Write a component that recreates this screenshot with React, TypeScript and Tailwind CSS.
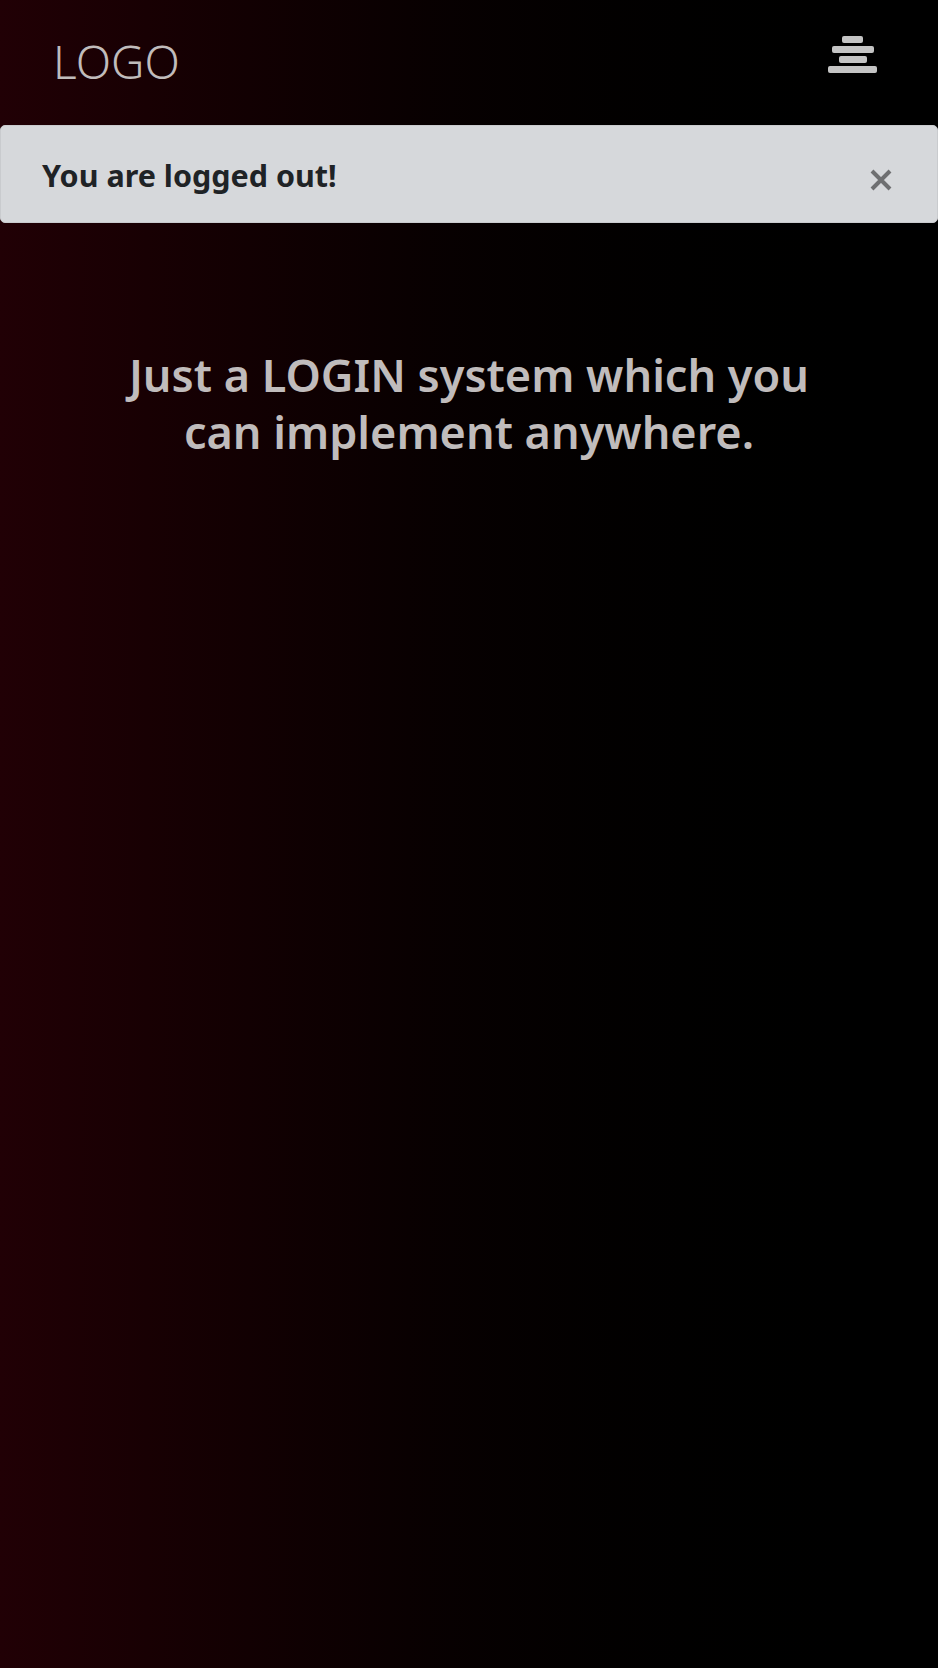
import { useState } from "react";

const font = { fontFamily: '"Segoe UI", "Noto Sans", "Open Sans", sans-serif' };

export default function App() {
  const [showAlert, setShowAlert] = useState(true);

  return (
    <div
      className="min-h-screen w-full bg-gradient-to-r from-[#210005] to-[#000000] text-[#c0bcbc]"
      style={font}
    >
      {/* Navbar */}
      <nav className="flex h-[125px] items-start justify-between px-[53px] pt-[38px]">
        <a href="#" className="text-[46px] font-light leading-none text-[#c0bcbc]">
          LOGO
        </a>
        <button className="-mt-[2px] mr-[8px] flex flex-col items-center gap-[3px]">
          <span className="h-[7px] w-[21px] rounded-[2px] bg-[#c4c4c4]" />
          <span className="h-[7px] w-[42px] rounded-[2px] bg-[#c4c4c4]" />
          <span className="h-[7px] w-[28px] rounded-[2px] bg-[#c4c4c4]" />
          <span className="h-[7px] w-[49px] rounded-[2px] bg-[#c4c4c4]" />
        </button>
      </nav>

      {/* Alert */}
      {showAlert && (
        <div className="flex h-[98px] items-center justify-between rounded-[5px] border border-[#c9cbce] bg-[#d6d8db] pl-[41px] pr-[44px]">
          <span className="mt-[3px] text-[30.5px] font-bold text-[#1f2326]">You are logged out!</span>
          <button
            onClick={() => setShowAlert(false)}
            className="mt-[12px] text-[#6e6f71]"
            aria-label="Close"
          >
            <svg width="24" height="24" viewBox="0 0 24 24">
              <path d="M3 3 L21 21 M21 3 L3 21" stroke="currentColor" strokeWidth="4" />
            </svg>
          </button>
        </div>
      )}

      {/* Hero */}
      <div className="px-8 pt-[123px] text-center">
        <h1 className="mx-auto max-w-[710px] text-[45px] font-semibold leading-[57px] text-[#c0bcbc]">
          Just a LOGIN system which you can implement anywhere.
        </h1>
      </div>
    </div>
  );
}
